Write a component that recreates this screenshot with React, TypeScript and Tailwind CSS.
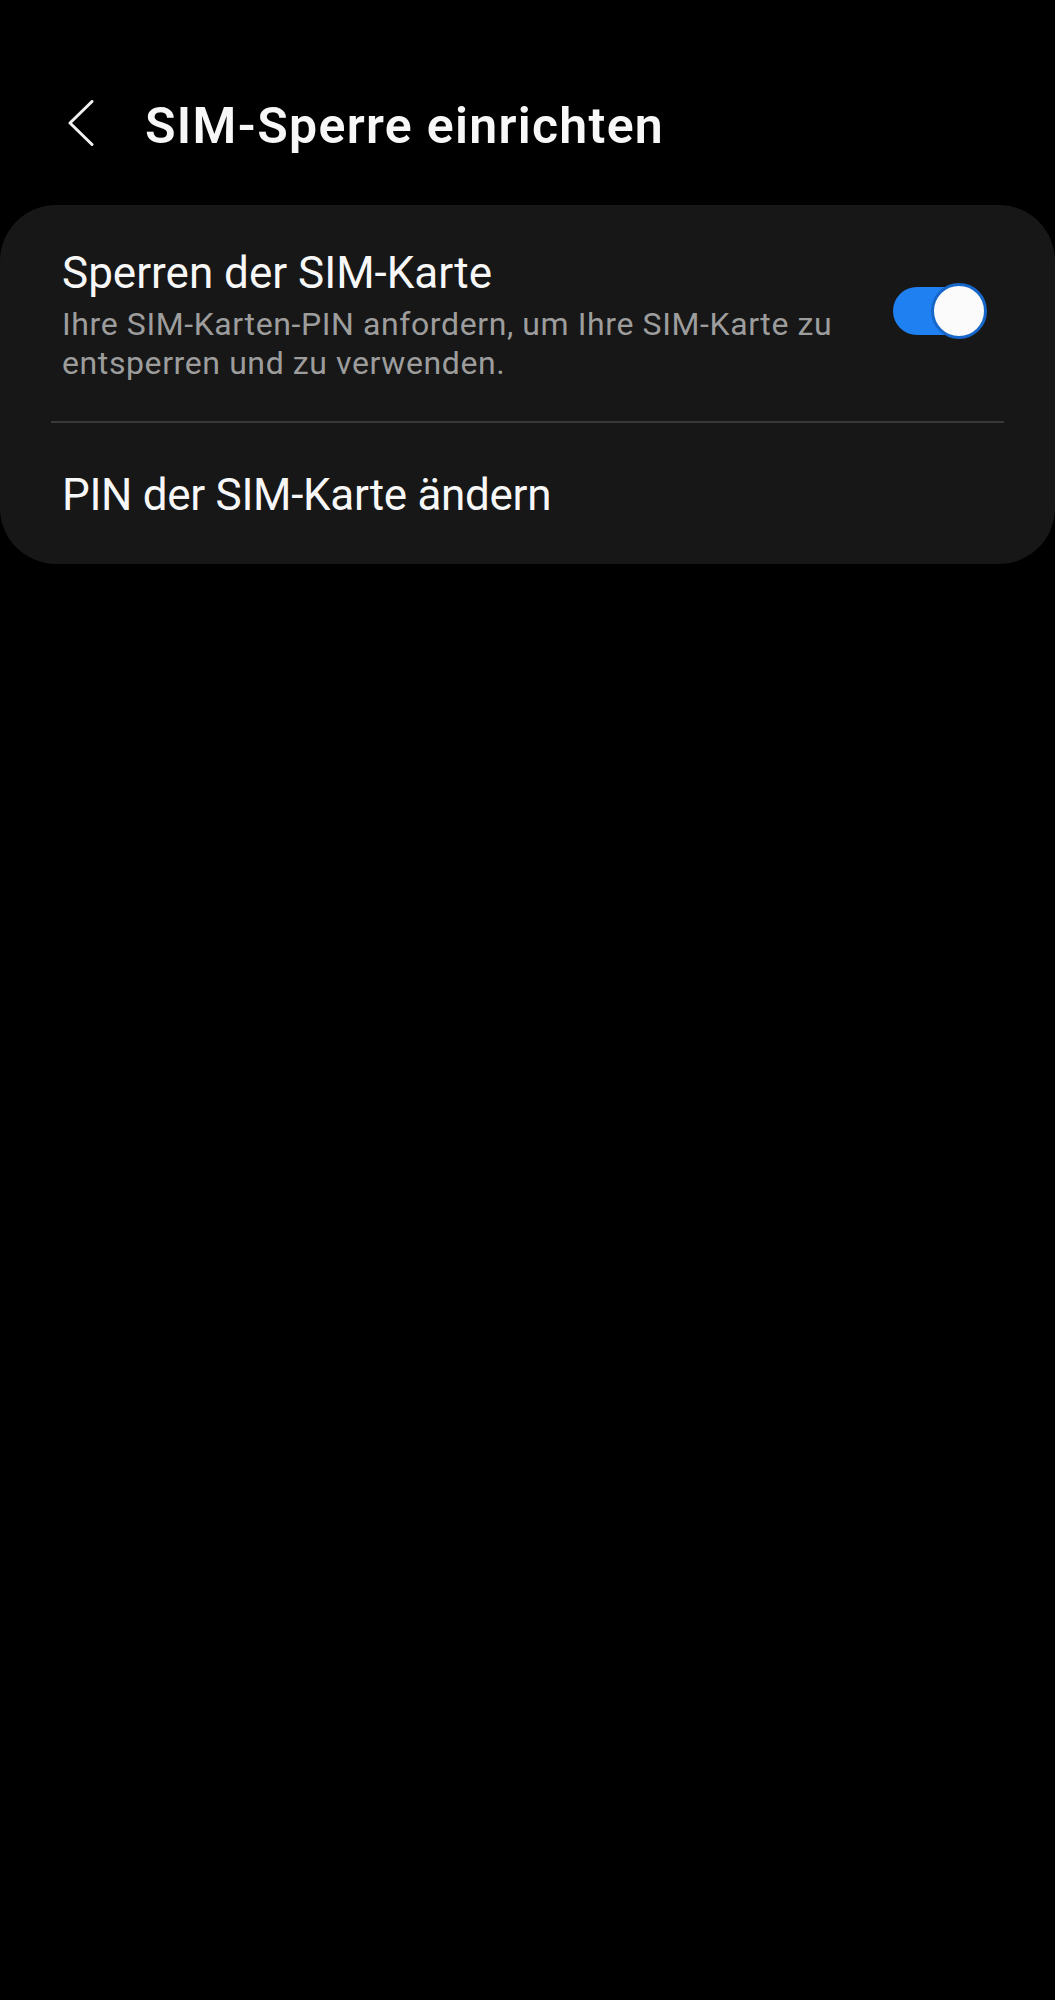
import React from "react";

const Toggle = ({ on }: { on: boolean }) => {
  return (
    <div className="relative w-[94px] h-[56px] shrink-0 flex items-center -mt-[8px]">
      <div
        className={`w-[80px] h-[48px] rounded-full ${
          on ? "bg-[#1f80f2]" : "bg-[#555555]"
        }`}
      />
      <div className="absolute right-0 top-0 w-[56px] h-[56px] rounded-full bg-[#fbfbfb] border-[3px] border-[#1667c9]" />
    </div>
  );
};

export default function App() {
  return (
    <div
      className="min-h-[2000px] w-full bg-black text-[#f7f7f7]"
      style={{ fontFamily: "Roboto, 'Noto Sans', sans-serif" }}
    >
      <div className="flex items-center pt-[96px] h-[156px]">
        <svg
          viewBox="0 0 26 46"
          className="ml-[66px] w-[28px] h-[46px] -mt-[6px]"
          fill="none"
          stroke="#f2f2f2"
          strokeWidth={3}
          strokeLinecap="round"
          strokeLinejoin="round"
        >
          <path d="M25 1.5 3 23l22 21.5" />
        </svg>
        <h1 className="ml-[51px] text-[50px] leading-[60px] font-semibold tracking-[1.3px]">
          SIM-Sperre einrichten
        </h1>
      </div>

      <div className="mt-[49px] bg-[#171717] rounded-[56px]">
        <div className="flex items-center pl-[62px] pr-[68px] pt-[42px] pb-[38px]">
          <div className="flex-1 pr-[30px]">
            <div className="text-[44px] leading-[52px]">Sperren der SIM-Karte</div>
            <div className="mt-[6px] text-[32px] leading-[39px] tracking-[0.6px] text-[#9d9d9d]">
              Ihre SIM-Karten-PIN anfordern, um Ihre SIM-Karte zu entsperren und zu
              verwenden.
            </div>
          </div>
          <Toggle on={true} />
        </div>
        <div className="mx-[51px] h-[2px] bg-[#383838]" />
        <div className="pl-[62px] pt-[46px] pb-[43px] text-[44px] leading-[52px] tracking-[-0.3px]">
          PIN der SIM-Karte ändern
        </div>
      </div>
    </div>
  );
}
